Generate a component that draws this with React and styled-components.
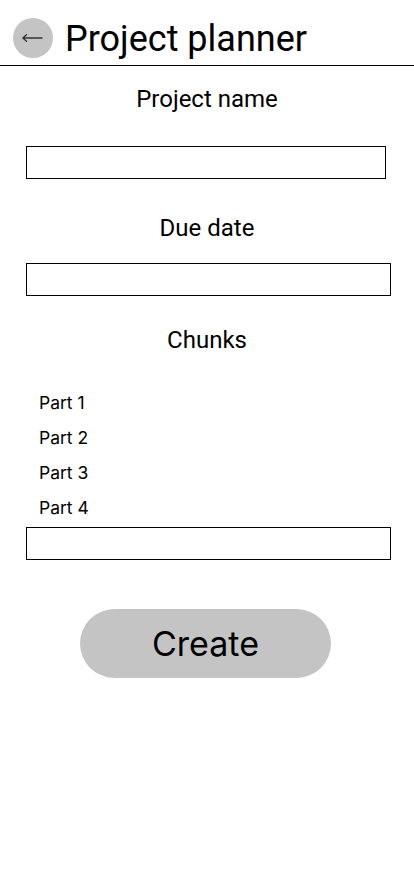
import React, { useState } from "react";
import styled, { createGlobalStyle } from "styled-components";

const GlobalStyle = createGlobalStyle`
  html, body {
    margin: 0;
    padding: 0;
    background: #fff;
  }
  body {
    font-family: Roboto, "Liberation Sans", sans-serif;
    color: #000;
  }
`;

const App = () => {
  const [parts] = useState(["Part 1", "Part 2", "Part 3", "Part 4"]);
  return (
    <Page>
      <GlobalStyle />
      <Header>
        <BackButton aria-label="Back">
          <svg width="22" height="12" viewBox="0 0 22 12">
            <path
              d="M2 6 H21 M5.5 2.8 L1.8 6 L5.5 9.2"
              fill="none"
              stroke="#333"
              strokeWidth="1.3"
              strokeLinecap="round"
              strokeLinejoin="round"
            />
          </svg>
        </BackButton>
        <Title>Project planner</Title>
      </Header>
      <Form>
        <Label>Project name</Label>
        <Field $width="360px" $top="33px" />
        <Label $top="35px">Due date</Label>
        <Field $width="365px" $top="21px" />
        <Label $top="30px">Chunks</Label>
        <PartList>
          {parts.map(p => (
            <Part key={p}>{p}</Part>
          ))}
        </PartList>
        <Field $width="365px" $top="9px" />
        <CreateButton>Create</CreateButton>
      </Form>
    </Page>
  );
};

export default App;

const Page = styled.div`
  width: 414px;
  min-height: 896px;
  background: #fff;
`;

const Header = styled.header`
  display: flex;
  align-items: flex-start;
  gap: 12px;
  height: 66px;
  padding: 18px 0 0 13px;
  box-sizing: border-box;
  border-bottom: 1px solid #000;
`;

const BackButton = styled.button`
  width: 40px;
  height: 40px;
  border: none;
  border-radius: 50%;
  background: #c4c4c4;
  padding: 0 2px 0 0;
  display: flex;
  align-items: center;
  justify-content: center;
  cursor: pointer;
`;

const Title = styled.h1`
  margin: 3px 0 0;
  font-family: Roboto, "Liberation Sans", sans-serif;
  font-weight: 400;
  font-size: 36px;
  line-height: 1;
`;

const Form = styled.div`
  display: flex;
  flex-direction: column;
  padding: 19px 0 0 26px;
`;

const Label = styled.div`
  width: 362px;
  margin-top: ${p => p.$top || "0"};
  text-align: center;
  font-family: Roboto, "Liberation Sans", sans-serif;
  font-size: 24px;
  line-height: 28px;
`;

const Field = styled.input`
  display: block;
  width: ${p => p.$width};
  height: 33px;
  margin-top: ${p => p.$top};
  box-sizing: border-box;
  border: 1px solid #000;
  border-radius: 0;
  padding: 0 6px;
  font-family: Roboto, sans-serif;
  font-size: 16px;
  outline: none;
`;

const PartList = styled.ul`
  list-style: none;
  margin: 39px 0 0;
  padding: 0 0 0 13px;
  display: flex;
  flex-direction: column;
  gap: 15px;
`;

const Part = styled.li`
  font-family: Inter, "Noto Sans", sans-serif;
  font-size: 17.5px;
  line-height: 20px;
`;

const CreateButton = styled.button`
  align-self: flex-start;
  margin: 49px 0 0 54px;
  width: 251px;
  height: 69px;
  border: none;
  border-radius: 35px;
  background: #c4c4c4;
  color: #000;
  font-family: Inter, Roboto, sans-serif;
  font-size: 34px;
  cursor: pointer;
`;
